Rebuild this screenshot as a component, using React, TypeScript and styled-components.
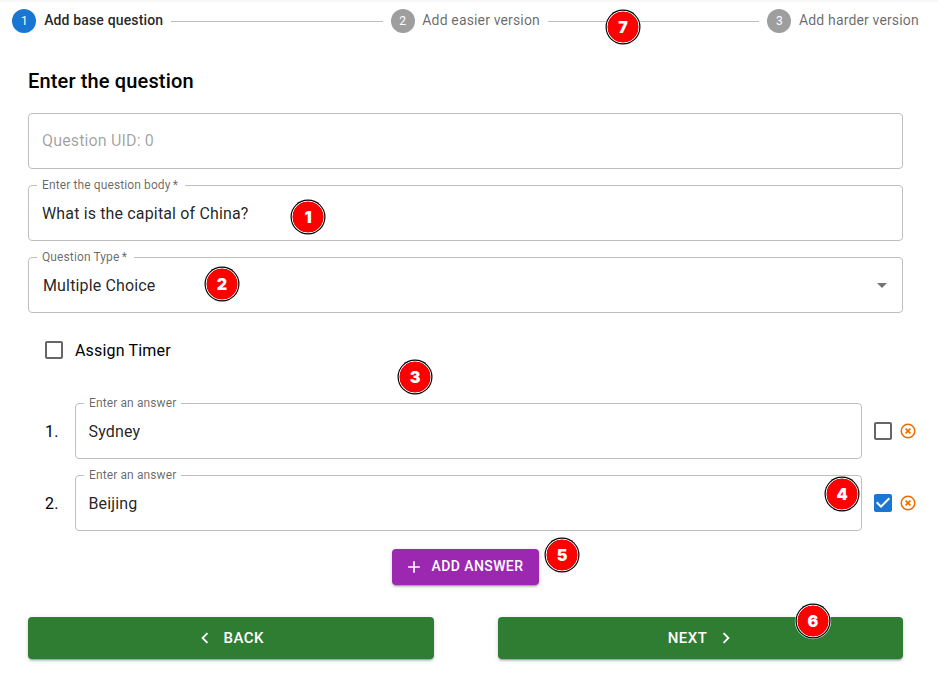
import React from "react";
import styled, { createGlobalStyle } from "styled-components";

const GlobalStyle = createGlobalStyle`
  * { box-sizing: border-box; }
  body {
    margin: 0;
    background: #fff;
    color: #000;
    font-family: Roboto, "Liberation Sans", sans-serif;
    font-size: 16px;
  }
`;

const Page = styled.div`
  position: relative;
  width: 938px;
  height: 677px;
  overflow: hidden;
  border-top: 2px solid #f8f8f8;
`;

const Stepper = styled.div`
  display: flex;
  align-items: center;
  height: 24px;
  margin: 7px 19.2px 0 12.45px;
`;

const Step = styled.div<{ $active?: boolean }>`
  display: flex;
  align-items: center;
  gap: 8px;
  flex: none;
  font-size: 14px;
  line-height: 20px;
  letter-spacing: 0.15px;
  white-space: nowrap;
  font-weight: ${(p) => (p.$active ? 500 : 400)};
  color: ${(p) => (p.$active ? "rgba(0,0,0,.87)" : "rgba(0,0,0,.6)")};
`;

const StepNumber = styled.span<{ $active?: boolean }>`
  width: 24px;
  height: 24px;
  border-radius: 50%;
  display: grid;
  place-items: center;
  font-size: 12px;
  font-weight: 400;
  letter-spacing: 0;
  color: #fff;
  background: ${(p) => (p.$active ? "#1976d2" : "#9e9e9e")};
`;

const StepLabel = styled.span`
  margin: -2px 0 0 -0.3px;
`;

const Connector = styled.span`
  flex: 1;
  margin: 1px 8px 0;
  border-top: 1px solid #bdbdbd;
`;

const Form = styled.main`
  padding: 32px 35px 0 28px;
`;

const Title = styled.h1`
  margin: 0 0 16px;
  font-size: 20px;
  font-weight: 500;
  line-height: 32px;
  letter-spacing: 0.15px;
`;

const Stack = styled.div`
  display: flex;
  flex-direction: column;
  gap: 16px;
`;

const Field = styled.div<{ $muted?: boolean; $indent?: number }>`
  position: relative;
  flex: 1 0 auto;
  display: flex;
  align-items: center;
  justify-content: space-between;
  height: 56px;
  padding: 0 8px ${(p) => (p.$muted ? 2 : 0)}px ${(p) => p.$indent ?? 13}px;
  border: 1px solid #bfbfbf;
  border-radius: 4px;
  line-height: 23px;
  letter-spacing: 0.15px;
  color: ${(p) => (p.$muted ? "rgba(0,0,0,.38)" : "rgba(0,0,0,.87)")};
`;

const FieldLabel = styled.span<{ $end?: number }>`
  position: absolute;
  left: 8px;
  top: -8px;
  padding: 0 ${(p) => p.$end ?? 5}px 0 5px;
  background: #fff;
  color: rgba(0, 0, 0, 0.6);
  font-size: 12px;
  line-height: 14px;
  letter-spacing: 0.11px;
  white-space: nowrap;
`;

const Asterisk = styled.span`
  margin-left: -0.8px;
`;

const TimerRow = styled.label`
  display: flex;
  align-items: center;
  gap: 9px;
  height: 24px;
  margin: 25px 0 41px 14px;
  letter-spacing: 0.17px;
`;

const AnswerRow = styled.div`
  display: flex;
  align-items: center;
  margin-right: -15px;
`;

const AnswerNumber = styled.span`
  width: 47px;
  padding-left: 17px;
  letter-spacing: 0.15px;
`;

const AnswerTools = styled.div`
  display: flex;
  align-items: center;
  gap: 4px;
  padding: 0 1px 0 9px;
`;

const Icon = styled.svg`
  display: block;
  flex: none;
`;

const Button = styled.button<{ $color: string; $large?: boolean }>`
  display: flex;
  align-items: center;
  justify-content: center;
  gap: 8px;
  width: 100%;
  height: ${(p) => (p.$large ? 42 : 36)}px;
  padding: 0;
  border: 0;
  border-radius: 4px;
  background: ${(p) => p.$color};
  color: #fff;
  font: 500 ${(p) => (p.$large ? 15 : 14)}px Roboto, sans-serif;
  letter-spacing: ${(p) => (p.$large ? 0.43 : 0.4)}px;
  box-shadow: 0 3px 1px -2px rgba(0, 0, 0, 0.2), 0 2px 2px rgba(0, 0, 0, 0.14),
    0 1px 5px rgba(0, 0, 0, 0.12);
`;

const AddWrap = styled.div`
  width: 147px;
  margin: 18px 0 32px 364px;

  svg {
    margin-left: -4px;
  }

  span {
    margin-top: -2px;
  }
`;

const Actions = styled.div`
  display: grid;
  grid-template-columns: 406px 405px;
  justify-content: space-between;

  svg:first-child {
    margin-left: -4.6px;
  }

  svg:last-child {
    margin-right: -4px;
  }
`;

const Marker = styled.span<{ $x: number; $y: number }>`
  position: absolute;
  left: ${(p) => p.$x - 16}px;
  top: ${(p) => p.$y - 18}px;
  width: 32px;
  height: 32px;
  border-radius: 50%;
  display: grid;
  place-items: center;
  background: radial-gradient(circle, #f00 15.3px, #fff 15.7px);
  box-shadow: 0 0 0 0.3px #fff, 0 0 0 1.5px #000, 0 0 0 2.2px rgba(255, 255, 255, 0.8);
  color: #fff;
  font: 900 16px/16px Inter, "Open Sans", sans-serif;
`;

const CheckBox = ({ checked }: { checked?: boolean }) => (
  <Icon width="24" height="24" viewBox="0 0 24 24" fill={checked ? "#1976d2" : "#666"}>
    {checked ? (
      <path d="M19 3H5c-1.11 0-2 .9-2 2v14c0 1.1.89 2 2 2h14c1.11 0 2-.9 2-2V5c0-1.1-.89-2-2-2zm-9 14l-5-5 1.41-1.41L10 14.17l7.59-7.59L19 8l-9 9z" />
    ) : (
      <path d="M19 5v14H5V5h14m0-2H5c-1.1 0-2 .9-2 2v14c0 1.1.9 2 2 2h14c1.1 0 2-.9 2-2V5c0-1.1-.9-2-2-2z" />
    )}
  </Icon>
);

const RemoveIcon = () => (
  <Icon width="18" height="18" viewBox="0 0 18 18" fill="none" stroke="#ed6c02">
    <circle cx="9" cy="9" r="6.8" strokeWidth="1.5" />
    <path d="M6.6 6.6l4.8 4.8M11.4 6.6l-4.8 4.8" strokeWidth="1.6" />
  </Icon>
);

const Chevron = ({ right }: { right?: boolean }) => (
  <Icon width="22" height="22" viewBox="0 0 24 24" fill="currentColor">
    <path
      d={
        right
          ? "M10 6L8.59 7.41 13.17 12l-4.58 4.59L10 18l6-6z"
          : "M15.41 7.41L14 6l-6 6 6 6 1.41-1.41L10.83 12z"
      }
    />
  </Icon>
);

const steps = ["Add base question", "Add easier version", "Add harder version"];
const answers = [
  { text: "Sydney", correct: false },
  { text: "Beijing", correct: true },
];
const markers = [
  [308, 217],
  [222, 284],
  [415, 377],
  [842, 494],
  [562, 555],
  [813, 621],
  [623, 27],
];

export default function App() {
  return (
    <Page>
      <GlobalStyle />
      <Stepper>
        {steps.map((label, i) => (
          <React.Fragment key={label}>
            {i > 0 && <Connector />}
            <Step $active={i === 0}>
              <StepNumber $active={i === 0}>{i + 1}</StepNumber>
              <StepLabel>{label}</StepLabel>
            </Step>
          </React.Fragment>
        ))}
      </Stepper>
      <Form>
        <Title>Enter the question</Title>
        <Stack>
          <Field $muted>Question UID: 0</Field>
          <Field>
            <FieldLabel $end={7}>
              Enter the question body <Asterisk>*</Asterisk>
            </FieldLabel>
            What is the capital of China?
          </Field>
          <Field $indent={14}>
            <FieldLabel $end={7}>
              Question Type <Asterisk>*</Asterisk>
            </FieldLabel>
            Multiple Choice
            <Icon width="24" height="24" viewBox="0 0 24 24" fill="#757575">
              <path d="M7 10l5 5 5-5z" />
            </Icon>
          </Field>
        </Stack>
        <TimerRow>
          <CheckBox />
          Assign Timer
        </TimerRow>
        <Stack>
          {answers.map((a, i) => (
            <AnswerRow key={a.text}>
              <AnswerNumber>{i + 1}.</AnswerNumber>
              <Field $indent={12.5}>
                <FieldLabel>Enter an answer</FieldLabel>
                {a.text}
              </Field>
              <AnswerTools>
                <CheckBox checked={a.correct} />
                <RemoveIcon />
              </AnswerTools>
            </AnswerRow>
          ))}
        </Stack>
        <AddWrap>
          <Button $color="#9c27b0">
            <Icon width="20" height="20" viewBox="0 0 24 24" fill="currentColor">
              <path d="M19 13h-6v6h-2v-6H5v-2h6V5h2v6h6v2z" />
            </Icon>
            <span>ADD ANSWER</span>
          </Button>
        </AddWrap>
        <Actions>
          <Button $color="#2e7d32" $large>
            <Chevron />
            <span>BACK</span>
          </Button>
          <Button $color="#2e7d32" $large>
            <span>NEXT</span>
            <Chevron right />
          </Button>
        </Actions>
      </Form>
      {markers.map(([x, y], i) => (
        <Marker key={i} $x={x} $y={y}>
          {i + 1}
        </Marker>
      ))}
    </Page>
  );
}
